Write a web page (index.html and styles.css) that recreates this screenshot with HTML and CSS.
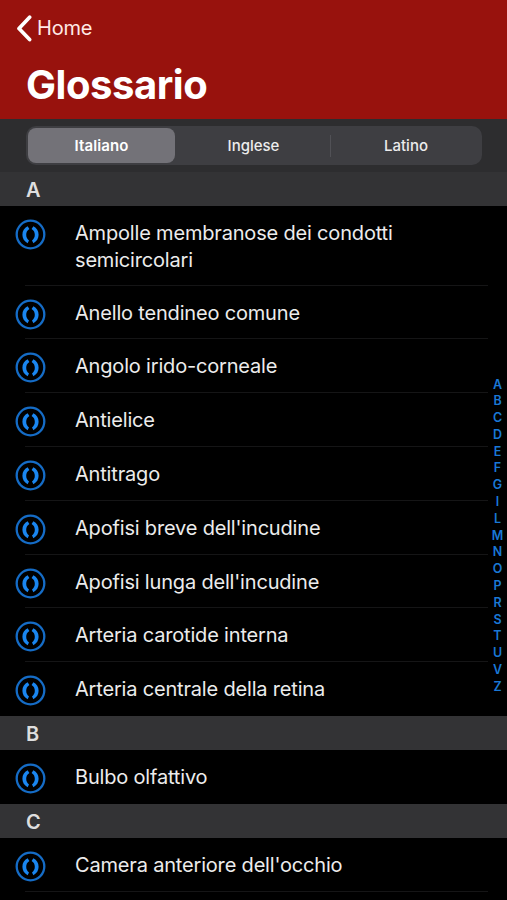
FILE: index.html
```html
<!DOCTYPE html>
<html lang="it">
<head>
<meta charset="utf-8">
<title>Glossario</title>
<link rel="stylesheet" href="styles.css">
</head>
<body>
<svg class="defs" aria-hidden="true">
  <symbol id="mark" viewBox="0 0 31 31">
    <circle cx="15.5" cy="15.5" r="13.8" fill="none" stroke="#156cc6" stroke-width="2.3"/>
    <path d="M12.6 7.3L14.4 9.9C12 11.4 11.2 13.4 11.2 15.7C11.2 18 12 19.8 14 21.4L12.6 24.2C9.2 22.4 7.4 19.4 7.4 15.8C7.4 12 9.2 8.9 12.6 7.3Z" fill="#1a86f0"/>
    <path d="M18.4 7.3L16.6 9.9C19 11.4 19.8 13.4 19.8 15.7C19.8 18 19 19.8 17 21.4L18.4 24.2C21.8 22.4 23.6 19.4 23.6 15.8C23.6 12 21.8 8.9 18.4 7.3Z" fill="#1a86f0"/>
  </symbol>
</svg>
<header class="header">
  <a class="back"><svg class="chevron" viewBox="0 0 16 28"><path d="M13.6 3.2L3 14.4L13.6 25.6"/></svg><span>Home</span></a>
  <h1 class="title">Glossario</h1>
</header>
<nav class="filter">
  <div class="segments">
    <span class="segment selected">Italiano</span>
    <span class="segment">Inglese</span>
    <span class="segment divided">Latino</span>
  </div>
</nav>
<main>
  <h2 class="letter">A</h2>
  <ul class="list">
    <li class="row tall"><svg class="icon"><use href="#mark"/></svg><span>Ampolle membranose dei condotti semicircolari</span></li>
    <li class="row"><svg class="icon"><use href="#mark"/></svg><span>Anello tendineo comune</span></li>
    <li class="row"><svg class="icon"><use href="#mark"/></svg><span>Angolo irido-corneale</span></li>
    <li class="row"><svg class="icon"><use href="#mark"/></svg><span>Antielice</span></li>
    <li class="row"><svg class="icon"><use href="#mark"/></svg><span>Antitrago</span></li>
    <li class="row"><svg class="icon"><use href="#mark"/></svg><span>Apofisi breve dell'incudine</span></li>
    <li class="row"><svg class="icon"><use href="#mark"/></svg><span>Apofisi lunga dell'incudine</span></li>
    <li class="row"><svg class="icon"><use href="#mark"/></svg><span>Arteria carotide interna</span></li>
    <li class="row last"><svg class="icon"><use href="#mark"/></svg><span>Arteria centrale della retina</span></li>
  </ul>
  <h2 class="letter">B</h2>
  <ul class="list">
    <li class="row last"><svg class="icon"><use href="#mark"/></svg><span>Bulbo olfattivo</span></li>
  </ul>
  <h2 class="letter">C</h2>
  <ul class="list">
    <li class="row"><svg class="icon"><use href="#mark"/></svg><span>Camera anteriore dell'occhio</span></li>
  </ul>
</main>
<aside class="index"><span>A</span><span>B</span><span>C</span><span>D</span><span>E</span><span>F</span><span>G</span><span>I</span><span>L</span><span>M</span><span>N</span><span>O</span><span>P</span><span>R</span><span>S</span><span>T</span><span>U</span><span>V</span><span>Z</span></aside>
</body>
</html>
```
FILE: styles.css
```css
* { box-sizing: border-box; }
body {
  margin: 0;
  height: 900px;
  overflow: hidden;
  position: relative;
  background: #000;
  color: #ececec;
  font-family: Inter, "Liberation Sans", sans-serif;
}
.defs { display: none; }
.header {
  height: 118.5px;
  padding: 13px 16px 0;
  background: #98120d;
  color: #fff;
}
.back {
  display: flex;
  align-items: center;
  gap: 5px;
  height: 30px;
  font-size: 20px;
  letter-spacing: -0.2px;
  color: #ffe9e6;
}
.chevron { width: 16px; height: 28px; fill: none; stroke: #fff; stroke-width: 3.7; stroke-linecap: round; stroke-linejoin: round; }
.title {
  margin: 18px 0 0 10px;
  font-size: 40px;
  line-height: 48px;
  font-weight: 700;
  letter-spacing: -0.45px;
}
.filter { height: 53.5px; padding: 7.5px 25px 0 26px; background: #2d2d2f; }
.segments {
  display: grid;
  grid-template-columns: 147px 157px 1fr;
  height: 39px;
  padding: 2px;
  border-radius: 10px;
  background: #3e3e42;
}
.segment {
  display: flex;
  align-items: center;
  justify-content: center;
  font-size: 15px;
  font-weight: 500;
}
.selected { background: #737278; border-radius: 8px; color: #fff; font-weight: 600; letter-spacing: 0.1px; }
.divided { padding-left: 2px; background: linear-gradient(#515156, #515156) 0 50% / 1px 22px no-repeat; margin-left: -2px; }
.letter {
  margin: 0;
  height: 34.2px;
  padding-left: 26px;
  background: #333335;
  font-size: 20px;
  line-height: 36px;
  font-weight: 600;
  color: #dedede;
}
.list { margin: 0; padding: 0; list-style: none; }
.row {
  display: flex;
  height: 53.8px;
  padding: 13px 80px 0 15px;
  font-size: 20px;
  line-height: 27px;
  letter-spacing: -0.18px;
  background: linear-gradient(#151516, #151516) 25px 100% / 463px 1px no-repeat;
}
.row span { padding-top: 1px; }
.row.last { background: none; }
.tall { height: 79.5px; }
.icon { flex: none; width: 31px; height: 31px; margin-right: 29px; }
.index {
  position: absolute;
  top: 376.5px;
  right: 0;
  width: 19px;
  display: flex;
  flex-direction: column;
  align-items: center;
  font-size: 12.5px;
  line-height: 16.8px;
  font-weight: 600;
  color: #1a78d6;
}
```
